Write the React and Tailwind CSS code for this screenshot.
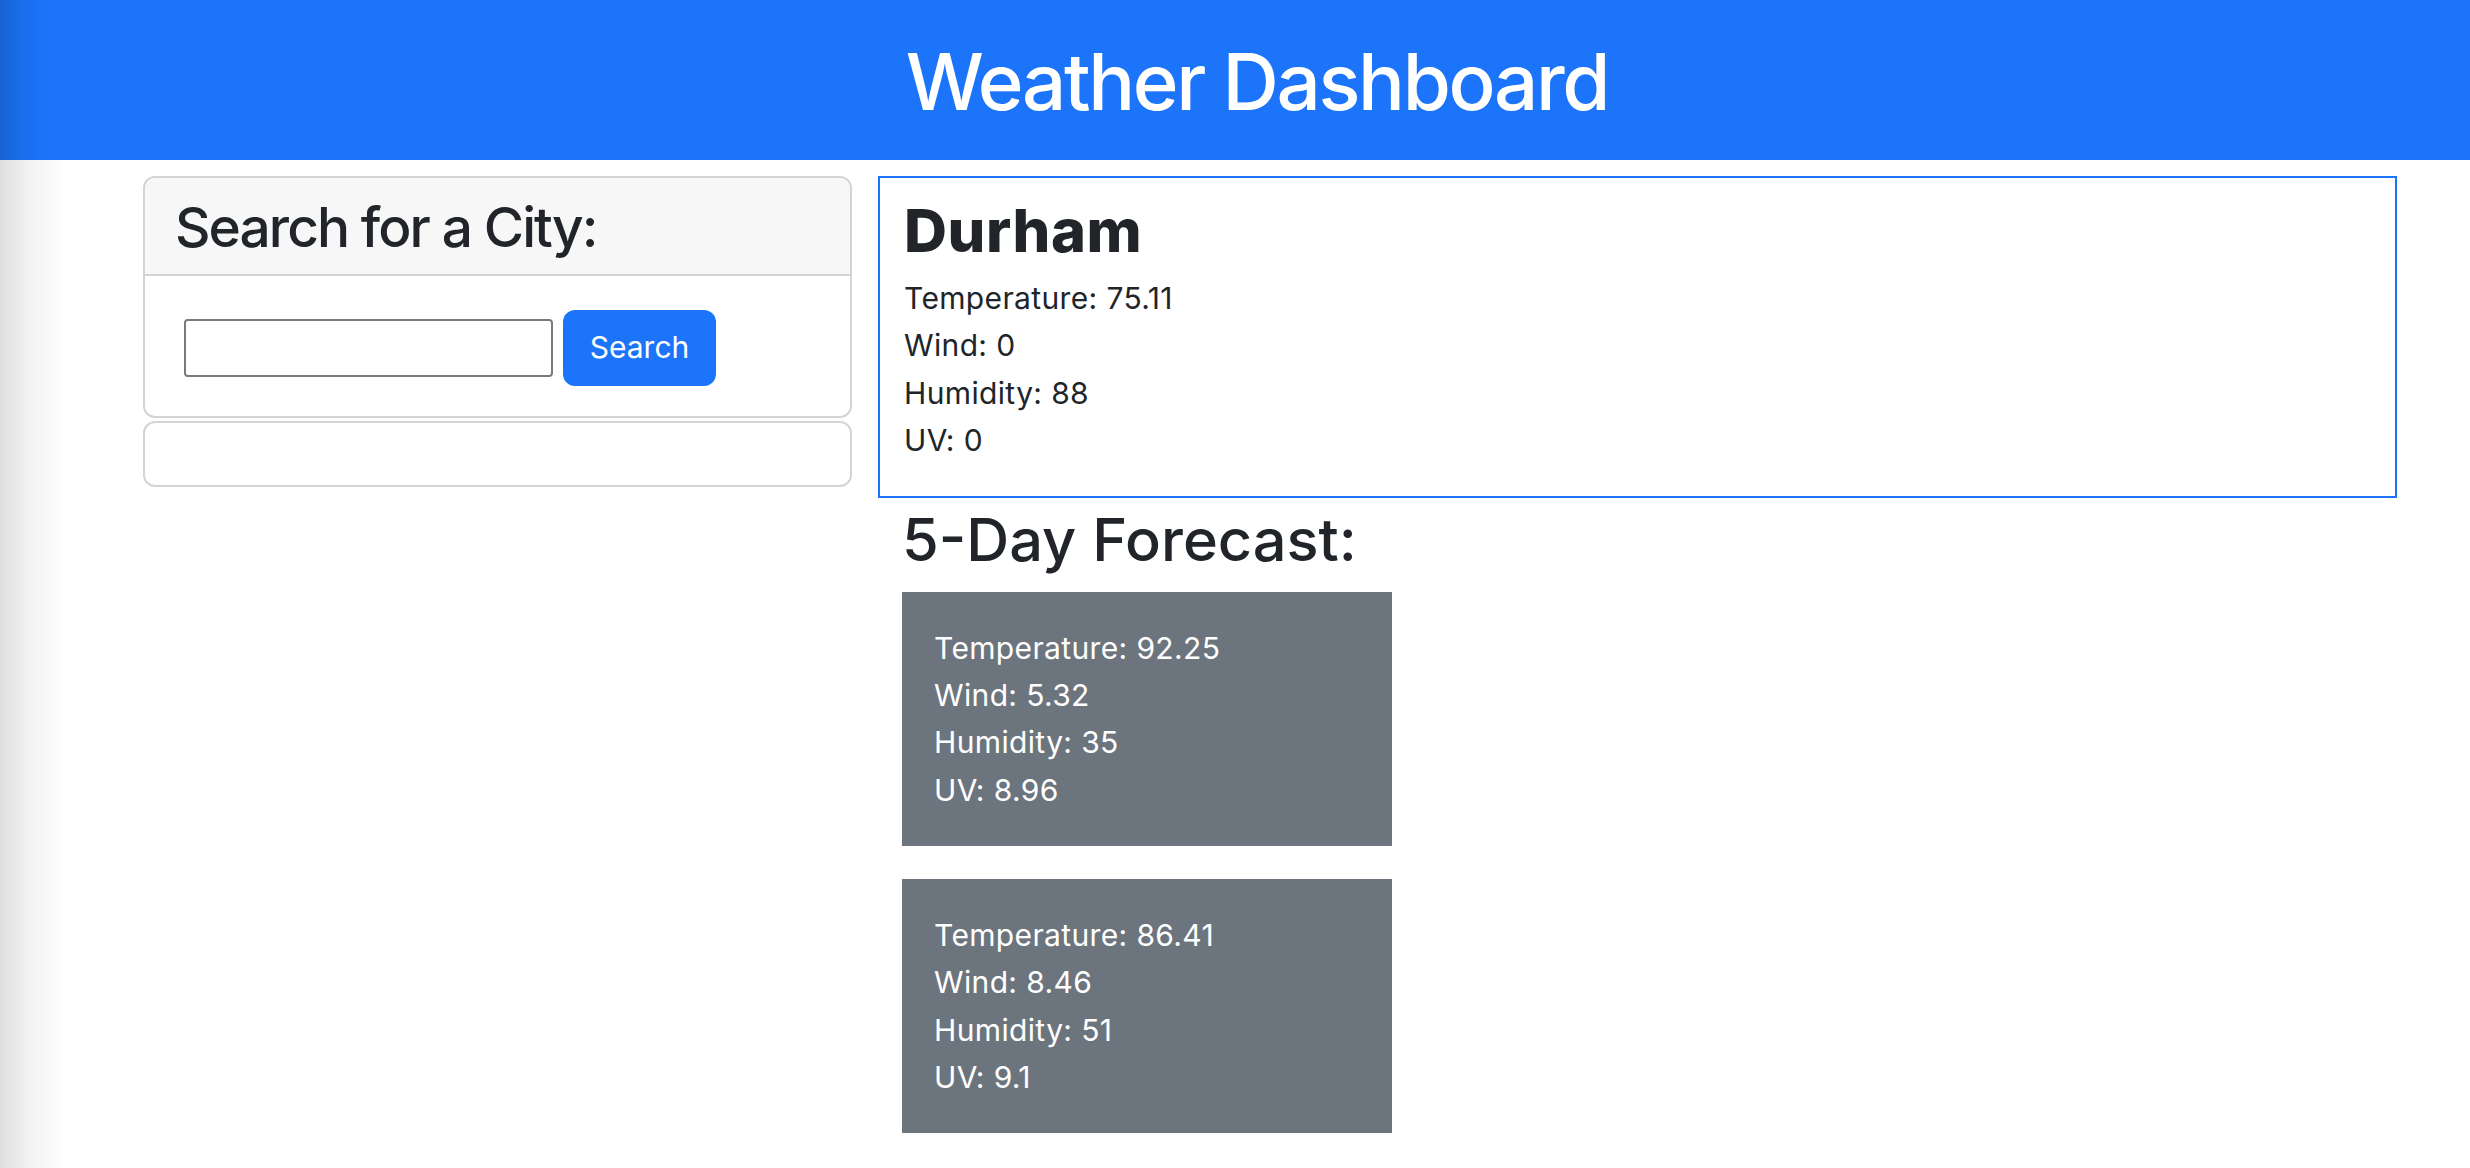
const today = {
  city: "Durham",
  temp: "75.11",
  wind: "0",
  humidity: "88",
  uv: "0",
};

const forecast = [
  { temp: "92.25", wind: "5.32", humidity: "35", uv: "8.96" },
  { temp: "86.41", wind: "8.46", humidity: "51", uv: "9.1" },
];

function Stats({ data }) {
  return (
    <>
      <p>Temperature: {data.temp}</p>
      <p>Wind: {data.wind}</p>
      <p>Humidity: {data.humidity}</p>
      <p>UV: {data.uv}</p>
    </>
  );
}

export default function App() {
  return (
    <div className="min-h-screen bg-[linear-gradient(to_right,#dedede,#f3f3f3_30px,#ffffff_68px)] font-['Inter',sans-serif] text-[30px] leading-[47.3px] tracking-[0.012em] text-[#212529]">
      <header className="h-[160px] flex justify-center pl-[44px] pt-[35px] bg-[linear-gradient(to_right,#1862d4,#1a6eec_22px,#1b74f9_50px)]">
        <h1 className="text-[78px] leading-[94px] font-medium tracking-[-0.03em] text-white">Weather Dashboard</h1>
      </header>

      <main className="flex gap-[26px] pl-[143px] pt-4">
        {/* search column */}
        <div className="w-[709px] flex-shrink-0">
          <div className="border-2 border-[#d4d4d4] rounded-[12px] overflow-hidden">
            <div className="bg-[#f7f7f7] border-b-2 border-[#d4d4d4] pl-[30px] pt-4 pb-[14px]">
              <h3 className="text-[55px] leading-[66px] font-medium tracking-[-0.035em]">Search for a City:</h3>
            </div>
            <form
              onSubmit={(e) => e.preventDefault()}
              className="flex items-center gap-[10px] pl-[39px] pt-[34px] pb-[30px]"
            >
              <input
                type="text"
                className="w-[369px] h-[58px] border-2 border-[#7b7b7b] rounded-[4px] bg-white outline-none"
              />
              <button
                type="submit"
                className="w-[153px] h-[76px] rounded-[12px] bg-[#1b74f9] text-white text-[30px] tracking-normal"
              >
                Search
              </button>
            </form>
          </div>
          <div className="mt-[3px] h-[66px] border-2 border-[#d4d4d4] rounded-[12px]"></div>
        </div>

        {/* results column */}
        <div className="w-[1519px] flex-shrink-0">
          <div className="border-2 border-[#1b74f9] pl-6 pt-[19px] pb-8">
            <h2 className="text-[59.5px] leading-[66px] font-extrabold tracking-[0.01em] mb-3">{today.city}</h2>
            <Stats data={today} />
          </div>

          <h3 className="ml-6 mt-[7px] mb-[17px] text-[59.5px] leading-[69.6px] font-medium tracking-normal">5-Day Forecast:</h3>

          <div className="ml-6 flex flex-col gap-[33px]">
            {forecast.map((day, i) => (
              <div key={i} className="w-[490px] bg-[#6c757d] text-white px-8 pt-[33px] pb-8">
                <Stats data={day} />
              </div>
            ))}
          </div>
        </div>
      </main>
    </div>
  );
}
